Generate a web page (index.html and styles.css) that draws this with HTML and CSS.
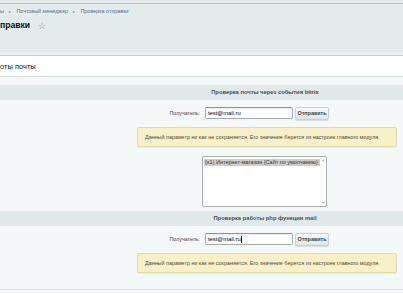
FILE: index.html
```html
<!DOCTYPE html>
<html lang="ru">
<head>
<meta charset="utf-8">
<link rel="stylesheet" href="styles.css">
</head>
<body>
<div class="top"></div>
<div class="header">
  <div class="crumbs">
    <span class="crumb">ы</span><span class="arr">▸</span>
    <span class="crumb">Почтовый менеджер</span><span class="arr">▸</span>
    <span class="crumb">Проверка отправки</span>
  </div>
  <div class="title-line">
    <h1 class="title">правки</h1>
    <span class="star">☆</span>
  </div>
</div>
<div class="tabbar"><span class="tab-title">оты почты</span></div>
<div class="content">
  <div class="heading">Проверка почты через события bitrix</div>
  <div class="row">
    <label class="label">Получатель:</label>
    <div class="field"><span class="input">test@mail.ru</span><span class="btn">Отправить</span></div>
  </div>
  <div class="note">Данный параметр ни как не сохраняется. Его значение берется из настроек главного модуля.</div>
  <div class="row sel-row">
    <div class="label"></div>
    <div class="field">
      <div class="select">
        <div class="options"><div class="opt selected">(s1) Интернет-магазин (Сайт по умолчанию)</div></div>
        <div class="sbar"><span class="sarr">▴</span><span class="sarr">▾</span></div>
      </div>
    </div>
  </div>
  <div class="heading h2">Проверка работы php функции mail</div>
  <div class="row">
    <label class="label">Получатель:</label>
    <div class="field"><span class="input">test@mail.ru<span class="caret"></span></span><span class="btn">Отправить</span></div>
  </div>
  <div class="note">Данный параметр ни как не сохраняется. Его значение берется из настроек главного модуля.</div>
  <div class="bottom"></div>
</div>
</body>
</html>
```
FILE: styles.css
```css
html, body { margin: 0; padding: 0; }
body {
  font-family: "Liberation Sans", Arial, sans-serif;
  background: #f5f8f9;
  color: #222;
  width: 403px;
  height: 294px;
  overflow: hidden;
}
.top {
  height: 3px;
  background: #e6eced;
  border-bottom: 1px solid #b8c1c3;
}
.header {
  background: #e3ebec;
  height: 48px;
  border-bottom: 3px solid #ebf0f1;
  box-shadow: 0 1px 0 #c9d1d3;
}
.crumbs {
  font-size: 5.4px;
  color: #55708e;
  padding-top: 4px;
  height: 7px;
  line-height: 7px;
  white-space: nowrap;
}
.arr { color: #7d8c96; font-size: 4px; margin: 0 4px 0 5px; }
.title-line {
  display: flex;
  align-items: center;
  margin-top: 5px;
  gap: 8px;
}
.title {
  margin: 0;
  font-size: 8.6px;
  font-weight: bold;
  color: #111;
  line-height: 11px;
}
.star { color: #7b8990; font-size: 8.5px; line-height: 10px; }
.tabbar {
  margin-top: 1px;
  background: #fff;
  height: 20px;
  border-bottom: 1px solid #d3dbdd;
  display: flex;
  align-items: center;
}
.tab-title { font-size: 7.5px; color: #111; padding-top: 1px; }
.content {
  padding-top: 8px;
}
.heading {
  background: #e0e8ea;
  height: 15px;
  line-height: 15px;
  font-size: 5.8px;
  font-weight: bold;
  color: #4a4f52;
  padding-left: 127px;
  text-align: center;
}
.h2 { margin-top: 4px; }
.row {
  display: grid;
  grid-template-columns: 200px 1fr;
  align-items: center;
  padding-top: 6px;
  height: 14px;
}
.label {
  text-align: right;
  font-size: 5.3px;
  color: #444;
  padding-right: 0;
}
.field { display: flex; align-items: center; gap: 2px; padding-left: 5px; }
.input {
  box-sizing: border-box;
  width: 88px;
  height: 12px;
  background: #fff;
  border: 1px solid #a4a9ab;
  border-top-color: #8e9497;
  border-radius: 2px;
  box-shadow: inset 0 1px 1px rgba(0,0,0,0.08);
  font-size: 5.8px;
  line-height: 10px;
  padding-left: 2px;
  color: #000;
  display: flex;
  align-items: center;
}
.caret { display: inline-block; width: 0.6px; height: 7px; background: #000; margin-left: 0.5px; }
.btn {
  box-sizing: border-box;
  height: 13px;
  width: 34px;
  border-radius: 2px;
  background: linear-gradient(#f8fafa, #e0e5e6);
  border: 1px solid #c8cfd1;
  box-shadow: 0 1px 1px rgba(0,0,0,0.12);
  font-size: 5.4px;
  font-weight: bold;
  color: #3c4346;
  display: flex;
  align-items: center;
  justify-content: center;
}
.note {
  margin: 7px 0 0 137px;
  box-sizing: border-box;
  width: 260px;
  height: 20px;
  background: #f8f1c7;
  border: 1px solid #e4dba4;
  border-radius: 2px;
  box-shadow: 0 1px 1px rgba(0,0,0,0.06);
  font-size: 5.4px;
  color: #4e4b3c;
  display: flex;
  align-items: center;
  padding-left: 7px;
  white-space: nowrap;
}
.sel-row { height: auto; padding-top: 9px; }
.sel-row .field { padding-left: 2px; }
.select {
  box-sizing: border-box;
  width: 125px;
  height: 51px;
  background: #fff;
  border: 1px solid #a8b0b2;
  border-radius: 2px;
  display: flex;
}
.options { flex: 1; padding: 2px 0 0 1px; }
.opt {
  font-size: 5.5px;
  color: #333;
  height: 7px;
  line-height: 7px;
  padding-left: 1px;
  white-space: nowrap;
}
.opt.selected { background: #cdcdcd; }
.sbar {
  width: 6px;
  display: flex;
  flex-direction: column;
  justify-content: space-between;
  align-items: center;
}
.sarr { font-size: 4px; color: #9aa2a5; line-height: 6px; }
.bottom {
  margin-top: 16px;
  border-top: 1px solid #dde4e6;
}
```
